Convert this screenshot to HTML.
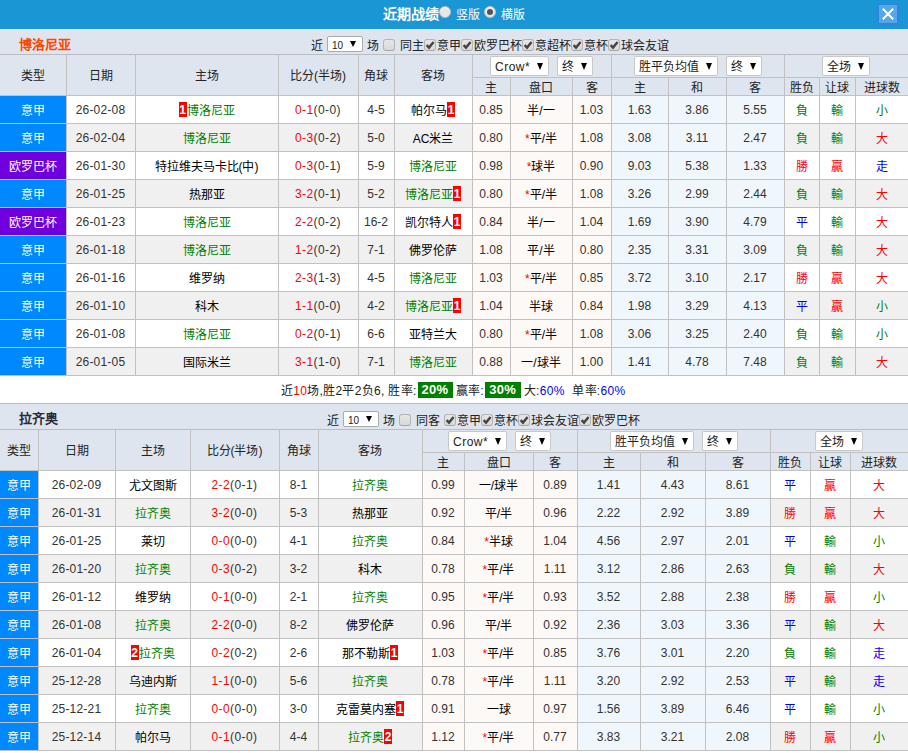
<!DOCTYPE html>
<html lang="zh-CN"><head><meta charset="utf-8"><title>近期战绩</title>
<style>
*{box-sizing:border-box;margin:0;padding:0}
html,body{width:908px;height:753px;overflow:hidden;background:#fff}
body{font-family:"Liberation Sans",sans-serif;font-size:12px;color:#333;position:relative}
.top{position:absolute;left:0;top:0;width:908px;height:29px;background:#1b96d5}
.ttl{position:absolute;left:383px;top:5px;font-size:14px;font-weight:bold;color:#fff;line-height:18px;white-space:nowrap}
.rl{position:absolute;top:7px;color:#fff;line-height:16px;white-space:nowrap}
.rd{position:absolute;top:6px;width:12px;height:12px;border-radius:50%;background:#e6e6e6;border:1px solid #bdbdbd;box-shadow:inset 0 1px 1px #fff}
.rd.on:after{content:"";position:absolute;left:2px;top:2px;width:6px;height:6px;border-radius:50%;background:#555}
.close{position:absolute;left:877px;top:3px;width:22px;height:22px;border:2px solid #2b87e0;background:#56a6ea}
.close svg{display:block}
.bar{position:absolute;left:0;width:908px;background:#dfe5ee}
.tn{position:absolute;left:19px;font-size:13px;font-weight:bold;line-height:15px;white-space:nowrap}
.tn.o{color:#ff4500}
.tn.d{color:#2a2a3a}
.flt{position:absolute;white-space:nowrap;line-height:16px;color:#222;display:flex;align-items:center;height:16px}
.sel{display:inline-flex;align-items:center;height:20px;background:#fff;border:1px solid #c8c8c8;border-radius:2px;color:#222;font-weight:normal;vertical-align:middle;padding-left:4px;white-space:nowrap;text-align:left;justify-content:space-between;padding-right:5px}
.sel .ar{display:block;width:0;height:0;border-left:3.5px solid transparent;border-right:3.5px solid transparent;border-top:7px solid #000}
.sel.ml{margin-left:8px}
.h1 th[colspan]{padding-right:1px;font-size:0;line-height:0}
.sel{font-size:12px;line-height:14px}
.sel .st{position:relative;top:1px}
.sel.s10 .st{top:2px}
.sel.s10 .ar{border-left-width:3px;border-right-width:3px;border-top-width:6px}
.sel.s10{height:16px;margin:-4px 4px 0 4px;padding-left:4px;padding-right:6px;font-size:10px;border-color:#ababab;border-radius:2px}
.cb{display:inline-block;width:12px;height:12px;border:1px solid #b4b4b4;border-bottom-color:#a6a6a6;border-radius:3px;background:linear-gradient(#e6e6e6,#d9d9d9);margin:-3px 5px 0 4px;position:relative}
.cb.on{margin:-3px 1px 0 0}
.cb svg{display:block;position:absolute;left:0;top:0}
table.tb{position:absolute;left:0;width:908px;border-collapse:separate;border-spacing:0;table-layout:fixed;border-top:1px solid #b9bcc0}
.tb th,.tb td{border-right:1px solid #c1c1c1;border-bottom:1px solid #c1c1c1;text-align:center;font-weight:normal;white-space:nowrap;overflow:hidden;padding:0 1px 0 0}
.tb th{background:#dfe5ee;color:#222}
.tb .nr{border-right:0}
.h1 th{height:23px}
.h1 th[rowspan]{height:41px;padding:0 1px 2px 0}
.h2 th{height:18px;line-height:14px;padding:3px 1px 0 0}
.tb td{height:28px;line-height:23px;padding:4px 1px 0 0;vertical-align:top}
.tb td.n{padding-top:3px}
tr.od td{background:#fff}
tr.ev td{background:#f0f0f0}
.tb td.hc{background:#fdf9f6}
.tb td.ec{background:#f0f7fc}
.tb td.lg{color:#fff}
.tb td.sa{background:#0088ff}
.tb td.el{background:#6f00dd}
.g{color:#008000}.r{color:#ff0000}.b{color:#0000ff}.k{color:#000}
.pk{color:#000}
.rc{background:#ff0000;color:#fff;font-weight:bold;display:inline-block;line-height:13px;padding-top:2px;height:15px;width:8px;text-align:center;vertical-align:baseline;position:relative;top:-1px}
.sum{position:absolute;left:0;width:908px;height:27px;line-height:30px;padding-left:281px;background:#fff;color:#222;white-space:nowrap;overflow:hidden;letter-spacing:.3px}
.gb{display:inline-block;background:#008000;color:#fff;font-weight:bold;line-height:16px;height:16px;width:35px;text-align:center;margin:0 3px 0 1px;vertical-align:top;position:relative;top:6px;font-size:13px}
.gb.g2{margin-left:1px;width:36px;margin-right:3px}
.ml3{margin-left:4px}
.gap4{display:inline-block;width:4px}
.tb td.sc{letter-spacing:.4px}
.tb td.dt{letter-spacing:.2px}

</style></head><body>
<div class="top"><span class="ttl">近期战绩</span><span class="rd" style="left:439px"></span><span class="rl" style="left:456px">竖版</span><span class="rd on" style="left:484px"></span><span class="rl" style="left:501px">横版</span>
<span class="close"><svg width="18" height="18" viewBox="0 0 18 18"><path d="M3.8 3.8 L14.2 14.2 M14.2 3.8 L3.8 14.2" stroke="#fff" stroke-width="2" fill="none"/></svg></span></div>
<div class="bar" style="top:29px;height:25px"><span class="tn o" style="top:8px">博洛尼亚</span>
<span class="flt" style="left:311px;top:9px">近<span class="sel s10" style="width:36px"><span class="st">10</span><span class="ar"></span></span>场<span class="cb"></span>同主<span class="cb on"><svg width="10" height="10" viewBox="0 0 10 10"><path d="M1.6 5.2 L4 7.6 L8.6 2" stroke="#444" stroke-width="2.4" fill="none"/></svg></span>意甲<span class="cb on"><svg width="10" height="10" viewBox="0 0 10 10"><path d="M1.6 5.2 L4 7.6 L8.6 2" stroke="#444" stroke-width="2.4" fill="none"/></svg></span>欧罗巴杯<span class="cb on"><svg width="10" height="10" viewBox="0 0 10 10"><path d="M1.6 5.2 L4 7.6 L8.6 2" stroke="#444" stroke-width="2.4" fill="none"/></svg></span>意超杯<span class="cb on"><svg width="10" height="10" viewBox="0 0 10 10"><path d="M1.6 5.2 L4 7.6 L8.6 2" stroke="#444" stroke-width="2.4" fill="none"/></svg></span>意杯<span class="cb on"><svg width="10" height="10" viewBox="0 0 10 10"><path d="M1.6 5.2 L4 7.6 L8.6 2" stroke="#444" stroke-width="2.4" fill="none"/></svg></span>球会友谊</span></div>
<table class="tb" style="top:54px">
<colgroup><col style="width:67px"><col style="width:69px"><col style="width:143px"><col style="width:80px"><col style="width:36px"><col style="width:78px"><col style="width:38px"><col style="width:62px"><col style="width:39px"><col style="width:57px"><col style="width:58px"><col style="width:58px"><col style="width:35px"><col style="width:36px"><col style="width:52px"></colgroup>
<tr class="h1"><th rowspan="2">类型</th><th rowspan="2">日期</th><th rowspan="2">主场</th><th rowspan="2">比分(半场)</th><th rowspan="2">角球</th><th rowspan="2">客场</th>
<th colspan="3"><span class="sel " style="width:59px"><span class="st"><span style="letter-spacing:.5px">Crow*</span></span><span class="ar"></span></span><span class="sel ml" style="width:36px"><span class="st">终</span><span class="ar"></span></span></th>
<th colspan="3"><span class="sel " style="width:84px"><span class="st">胜平负均值</span><span class="ar"></span></span><span class="sel ml" style="width:36px"><span class="st">终</span><span class="ar"></span></span></th>
<th colspan="3" class="nr"><span class="sel " style="width:48px"><span class="st">全场</span><span class="ar"></span></span></th></tr>
<tr class="h2"><th>主</th><th>盘口</th><th>客</th><th>主</th><th>和</th><th>客</th><th>胜负</th><th>让球</th><th class="nr">进球数</th></tr>
<tr class="od">
<td class="lg sa">意甲</td><td class="n dt">26-02-08</td><td><span class="rc">1</span><span class="g">博洛尼亚</span></td><td class="n sc"><span class="r">0-1</span>(0-0)</td><td class="n">4-5</td><td><span class="k">帕尔马</span><span class="rc">1</span></td>
<td class="hc n">0.85</td><td class="hc pk">半/一</td><td class="hc n">1.03</td>
<td class="ec n">1.63</td><td class="ec n">3.86</td><td class="ec n">5.55</td>
<td><span class="g t">負</span></td><td><span class="g t">輸</span></td><td class="nr"><span class="g t">小</span></td></tr>
<tr class="ev">
<td class="lg sa">意甲</td><td class="n dt">26-02-04</td><td><span class="g">博洛尼亚</span></td><td class="n sc"><span class="r">0-3</span>(0-2)</td><td class="n">5-0</td><td><span class="k">AC米兰</span></td>
<td class="hc n">0.80</td><td class="hc pk"><span class="r">*</span>平/半</td><td class="hc n">1.08</td>
<td class="ec n">3.08</td><td class="ec n">3.11</td><td class="ec n">2.47</td>
<td><span class="g t">負</span></td><td><span class="g t">輸</span></td><td class="nr"><span class="r t">大</span></td></tr>
<tr class="od">
<td class="lg el">欧罗巴杯</td><td class="n dt">26-01-30</td><td><span class="k">特拉维夫马卡比(中)</span></td><td class="n sc"><span class="r">0-3</span>(0-1)</td><td class="n">5-9</td><td><span class="g">博洛尼亚</span></td>
<td class="hc n">0.98</td><td class="hc pk"><span class="r">*</span>球半</td><td class="hc n">0.90</td>
<td class="ec n">9.03</td><td class="ec n">5.38</td><td class="ec n">1.33</td>
<td><span class="r t">勝</span></td><td><span class="r t">贏</span></td><td class="nr"><span class="b t">走</span></td></tr>
<tr class="ev">
<td class="lg sa">意甲</td><td class="n dt">26-01-25</td><td><span class="k">热那亚</span></td><td class="n sc"><span class="r">3-2</span>(0-1)</td><td class="n">5-2</td><td><span class="g">博洛尼亚</span><span class="rc">1</span></td>
<td class="hc n">0.80</td><td class="hc pk"><span class="r">*</span>平/半</td><td class="hc n">1.08</td>
<td class="ec n">3.26</td><td class="ec n">2.99</td><td class="ec n">2.44</td>
<td><span class="g t">負</span></td><td><span class="g t">輸</span></td><td class="nr"><span class="r t">大</span></td></tr>
<tr class="od">
<td class="lg el">欧罗巴杯</td><td class="n dt">26-01-23</td><td><span class="g">博洛尼亚</span></td><td class="n sc"><span class="r">2-2</span>(0-2)</td><td class="n">16-2</td><td><span class="k">凯尔特人</span><span class="rc">1</span></td>
<td class="hc n">0.84</td><td class="hc pk">半/一</td><td class="hc n">1.04</td>
<td class="ec n">1.69</td><td class="ec n">3.90</td><td class="ec n">4.79</td>
<td><span class="b t">平</span></td><td><span class="g t">輸</span></td><td class="nr"><span class="r t">大</span></td></tr>
<tr class="ev">
<td class="lg sa">意甲</td><td class="n dt">26-01-18</td><td><span class="g">博洛尼亚</span></td><td class="n sc"><span class="r">1-2</span>(0-2)</td><td class="n">7-1</td><td><span class="k">佛罗伦萨</span></td>
<td class="hc n">1.08</td><td class="hc pk">平/半</td><td class="hc n">0.80</td>
<td class="ec n">2.35</td><td class="ec n">3.31</td><td class="ec n">3.09</td>
<td><span class="g t">負</span></td><td><span class="g t">輸</span></td><td class="nr"><span class="r t">大</span></td></tr>
<tr class="od">
<td class="lg sa">意甲</td><td class="n dt">26-01-16</td><td><span class="k">维罗纳</span></td><td class="n sc"><span class="r">2-3</span>(1-3)</td><td class="n">4-5</td><td><span class="g">博洛尼亚</span></td>
<td class="hc n">1.03</td><td class="hc pk"><span class="r">*</span>平/半</td><td class="hc n">0.85</td>
<td class="ec n">3.72</td><td class="ec n">3.10</td><td class="ec n">2.17</td>
<td><span class="r t">勝</span></td><td><span class="r t">贏</span></td><td class="nr"><span class="r t">大</span></td></tr>
<tr class="ev">
<td class="lg sa">意甲</td><td class="n dt">26-01-10</td><td><span class="k">科木</span></td><td class="n sc"><span class="r">1-1</span>(0-0)</td><td class="n">4-2</td><td><span class="g">博洛尼亚</span><span class="rc">1</span></td>
<td class="hc n">1.04</td><td class="hc pk">半球</td><td class="hc n">0.84</td>
<td class="ec n">1.98</td><td class="ec n">3.29</td><td class="ec n">4.13</td>
<td><span class="b t">平</span></td><td><span class="r t">贏</span></td><td class="nr"><span class="g t">小</span></td></tr>
<tr class="od">
<td class="lg sa">意甲</td><td class="n dt">26-01-08</td><td><span class="g">博洛尼亚</span></td><td class="n sc"><span class="r">0-2</span>(0-1)</td><td class="n">6-6</td><td><span class="k">亚特兰大</span></td>
<td class="hc n">0.80</td><td class="hc pk"><span class="r">*</span>平/半</td><td class="hc n">1.08</td>
<td class="ec n">3.06</td><td class="ec n">3.25</td><td class="ec n">2.40</td>
<td><span class="g t">負</span></td><td><span class="g t">輸</span></td><td class="nr"><span class="g t">小</span></td></tr>
<tr class="ev">
<td class="lg sa">意甲</td><td class="n dt">26-01-05</td><td><span class="k">国际米兰</span></td><td class="n sc"><span class="r">3-1</span>(1-0)</td><td class="n">7-1</td><td><span class="g">博洛尼亚</span></td>
<td class="hc n">0.88</td><td class="hc pk">一/球半</td><td class="hc n">1.00</td>
<td class="ec n">1.41</td><td class="ec n">4.78</td><td class="ec n">7.48</td>
<td><span class="g t">負</span></td><td><span class="g t">輸</span></td><td class="nr"><span class="r t">大</span></td></tr>
</table>
<div class="sum" style="top:376px">近<span class="r">10</span>场,胜2平2负6, 胜率:<span class="gb">20%</span>赢率:<span class="gb g2">30%</span>大:<span class="b">60%</span> <span class="ml3">单率:</span><span class="b">60%</span></div>
<div class="bar" style="top:403px;height:26px;border-top:1px solid #b9bcc0"><span class="tn d" style="top:7px">拉齐奥</span>
<span class="flt" style="left:327px;top:9px">近<span class="sel s10" style="width:36px"><span class="st">10</span><span class="ar"></span></span>场<span class="cb"></span>同客<span class="gap4"></span><span class="cb on"><svg width="10" height="10" viewBox="0 0 10 10"><path d="M1.6 5.2 L4 7.6 L8.6 2" stroke="#444" stroke-width="2.4" fill="none"/></svg></span>意甲<span class="cb on"><svg width="10" height="10" viewBox="0 0 10 10"><path d="M1.6 5.2 L4 7.6 L8.6 2" stroke="#444" stroke-width="2.4" fill="none"/></svg></span>意杯<span class="cb on"><svg width="10" height="10" viewBox="0 0 10 10"><path d="M1.6 5.2 L4 7.6 L8.6 2" stroke="#444" stroke-width="2.4" fill="none"/></svg></span>球会友谊<span class="cb on"><svg width="10" height="10" viewBox="0 0 10 10"><path d="M1.6 5.2 L4 7.6 L8.6 2" stroke="#444" stroke-width="2.4" fill="none"/></svg></span>欧罗巴杯</span></div>
<table class="tb" style="top:429px">
<colgroup><col style="width:39px"><col style="width:77px"><col style="width:75px"><col style="width:89px"><col style="width:39px"><col style="width:104px"><col style="width:42px"><col style="width:69px"><col style="width:44px"><col style="width:63px"><col style="width:65px"><col style="width:65px"><col style="width:40px"><col style="width:40px"><col style="width:57px"></colgroup>
<tr class="h1"><th rowspan="2">类型</th><th rowspan="2">日期</th><th rowspan="2">主场</th><th rowspan="2">比分(半场)</th><th rowspan="2">角球</th><th rowspan="2">客场</th>
<th colspan="3"><span class="sel " style="width:59px"><span class="st"><span style="letter-spacing:.5px">Crow*</span></span><span class="ar"></span></span><span class="sel ml" style="width:36px"><span class="st">终</span><span class="ar"></span></span></th>
<th colspan="3"><span class="sel " style="width:84px"><span class="st">胜平负均值</span><span class="ar"></span></span><span class="sel ml" style="width:36px"><span class="st">终</span><span class="ar"></span></span></th>
<th colspan="3" class="nr"><span class="sel " style="width:48px"><span class="st">全场</span><span class="ar"></span></span></th></tr>
<tr class="h2"><th>主</th><th>盘口</th><th>客</th><th>主</th><th>和</th><th>客</th><th>胜负</th><th>让球</th><th class="nr">进球数</th></tr>
<tr class="od">
<td class="lg sa">意甲</td><td class="n dt">26-02-09</td><td><span class="k">尤文图斯</span></td><td class="n sc"><span class="r">2-2</span>(0-1)</td><td class="n">8-1</td><td><span class="g">拉齐奥</span></td>
<td class="hc n">0.99</td><td class="hc pk">一/球半</td><td class="hc n">0.89</td>
<td class="ec n">1.41</td><td class="ec n">4.43</td><td class="ec n">8.61</td>
<td><span class="b t">平</span></td><td><span class="r t">贏</span></td><td class="nr"><span class="r t">大</span></td></tr>
<tr class="ev">
<td class="lg sa">意甲</td><td class="n dt">26-01-31</td><td><span class="g">拉齐奥</span></td><td class="n sc"><span class="r">3-2</span>(0-0)</td><td class="n">5-3</td><td><span class="k">热那亚</span></td>
<td class="hc n">0.92</td><td class="hc pk">平/半</td><td class="hc n">0.96</td>
<td class="ec n">2.22</td><td class="ec n">2.92</td><td class="ec n">3.89</td>
<td><span class="r t">勝</span></td><td><span class="r t">贏</span></td><td class="nr"><span class="r t">大</span></td></tr>
<tr class="od">
<td class="lg sa">意甲</td><td class="n dt">26-01-25</td><td><span class="k">莱切</span></td><td class="n sc"><span class="r">0-0</span>(0-0)</td><td class="n">4-1</td><td><span class="g">拉齐奥</span></td>
<td class="hc n">0.84</td><td class="hc pk"><span class="r">*</span>半球</td><td class="hc n">1.04</td>
<td class="ec n">4.56</td><td class="ec n">2.97</td><td class="ec n">2.01</td>
<td><span class="b t">平</span></td><td><span class="g t">輸</span></td><td class="nr"><span class="g t">小</span></td></tr>
<tr class="ev">
<td class="lg sa">意甲</td><td class="n dt">26-01-20</td><td><span class="g">拉齐奥</span></td><td class="n sc"><span class="r">0-3</span>(0-2)</td><td class="n">3-2</td><td><span class="k">科木</span></td>
<td class="hc n">0.78</td><td class="hc pk"><span class="r">*</span>平/半</td><td class="hc n">1.11</td>
<td class="ec n">3.12</td><td class="ec n">2.86</td><td class="ec n">2.63</td>
<td><span class="g t">負</span></td><td><span class="g t">輸</span></td><td class="nr"><span class="r t">大</span></td></tr>
<tr class="od">
<td class="lg sa">意甲</td><td class="n dt">26-01-12</td><td><span class="k">维罗纳</span></td><td class="n sc"><span class="r">0-1</span>(0-0)</td><td class="n">2-1</td><td><span class="g">拉齐奥</span></td>
<td class="hc n">0.95</td><td class="hc pk"><span class="r">*</span>平/半</td><td class="hc n">0.93</td>
<td class="ec n">3.52</td><td class="ec n">2.88</td><td class="ec n">2.38</td>
<td><span class="r t">勝</span></td><td><span class="r t">贏</span></td><td class="nr"><span class="g t">小</span></td></tr>
<tr class="ev">
<td class="lg sa">意甲</td><td class="n dt">26-01-08</td><td><span class="g">拉齐奥</span></td><td class="n sc"><span class="r">2-2</span>(0-0)</td><td class="n">8-2</td><td><span class="k">佛罗伦萨</span></td>
<td class="hc n">0.96</td><td class="hc pk">平/半</td><td class="hc n">0.92</td>
<td class="ec n">2.36</td><td class="ec n">3.03</td><td class="ec n">3.36</td>
<td><span class="b t">平</span></td><td><span class="g t">輸</span></td><td class="nr"><span class="r t">大</span></td></tr>
<tr class="od">
<td class="lg sa">意甲</td><td class="n dt">26-01-04</td><td><span class="rc">2</span><span class="g">拉齐奥</span></td><td class="n sc"><span class="r">0-2</span>(0-2)</td><td class="n">2-6</td><td><span class="k">那不勒斯</span><span class="rc">1</span></td>
<td class="hc n">1.03</td><td class="hc pk"><span class="r">*</span>平/半</td><td class="hc n">0.85</td>
<td class="ec n">3.76</td><td class="ec n">3.01</td><td class="ec n">2.20</td>
<td><span class="g t">負</span></td><td><span class="g t">輸</span></td><td class="nr"><span class="b t">走</span></td></tr>
<tr class="ev">
<td class="lg sa">意甲</td><td class="n dt">25-12-28</td><td><span class="k">乌迪内斯</span></td><td class="n sc"><span class="r">1-1</span>(0-0)</td><td class="n">5-6</td><td><span class="g">拉齐奥</span></td>
<td class="hc n">0.78</td><td class="hc pk"><span class="r">*</span>平/半</td><td class="hc n">1.11</td>
<td class="ec n">3.20</td><td class="ec n">2.92</td><td class="ec n">2.53</td>
<td><span class="b t">平</span></td><td><span class="g t">輸</span></td><td class="nr"><span class="b t">走</span></td></tr>
<tr class="od">
<td class="lg sa">意甲</td><td class="n dt">25-12-21</td><td><span class="g">拉齐奥</span></td><td class="n sc"><span class="r">0-0</span>(0-0)</td><td class="n">3-0</td><td><span class="k">克雷莫内塞</span><span class="rc">1</span></td>
<td class="hc n">0.91</td><td class="hc pk">一球</td><td class="hc n">0.97</td>
<td class="ec n">1.56</td><td class="ec n">3.89</td><td class="ec n">6.46</td>
<td><span class="b t">平</span></td><td><span class="g t">輸</span></td><td class="nr"><span class="g t">小</span></td></tr>
<tr class="ev">
<td class="lg sa">意甲</td><td class="n dt">25-12-14</td><td><span class="k">帕尔马</span></td><td class="n sc"><span class="r">0-1</span>(0-0)</td><td class="n">4-4</td><td><span class="g">拉齐奥</span><span class="rc">2</span></td>
<td class="hc n">1.12</td><td class="hc pk"><span class="r">*</span>平/半</td><td class="hc n">0.77</td>
<td class="ec n">3.83</td><td class="ec n">3.21</td><td class="ec n">2.08</td>
<td><span class="r t">勝</span></td><td><span class="r t">贏</span></td><td class="nr"><span class="g t">小</span></td></tr>
</table>
</body></html>
